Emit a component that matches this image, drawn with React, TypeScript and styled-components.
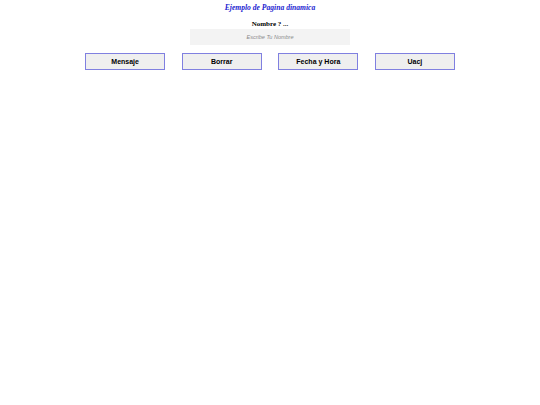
import React, { useState } from 'react'
import styled, { createGlobalStyle } from 'styled-components'

const GlobalStyle = createGlobalStyle`
  html, body {
    margin: 0;
    padding: 0;
    background: #ffffff;
  }
`

const Page = styled.div`
  display: flex;
  flex-direction: column;
  align-items: center;
  padding-top: 3px;
`

const Title = styled.h1`
  margin: 0;
  font-family: 'Liberation Serif', 'Times New Roman', serif;
  font-style: italic;
  font-weight: bold;
  font-size: 7.6px;
  line-height: 9px;
  color: #1c1cd0;
`

const Label = styled.div`
  margin-top: 8px;
  font-family: 'Liberation Serif', 'Times New Roman', serif;
  font-weight: bold;
  font-size: 7px;
  line-height: 8px;
  color: #000;
`

const NameInput = styled.input`
  box-sizing: border-box;
  margin-top: 1px;
  width: 160px;
  height: 16px;
  border: none;
  outline: none;
  background: #f3f3f3;
  text-align: center;
  font-family: 'Liberation Sans', Arial, sans-serif;
  font-size: 5.5px;
  color: #333;

  &::placeholder {
    color: #8a8a8a;
    font-style: italic;
  }
`

const ButtonRow = styled.div`
  display: flex;
  justify-content: center;
  gap: 16.6px;
  margin-top: 8px;
`

const ActionButton = styled.button`
  box-sizing: border-box;
  width: 80px;
  height: 17px;
  padding: 0;
  border: 1px solid #8080e0;
  background: #efefef;
  font-family: 'Liberation Sans', Arial, sans-serif;
  font-weight: bold;
  font-size: 7px;
  color: #000;
  cursor: pointer;
`

const Output = styled.div`
  margin-top: 6px;
  font-family: 'Liberation Sans', Arial, sans-serif;
  font-size: 7px;
`

export default function App() {
  const [name, setName] = useState('')
  const [message, setMessage] = useState('')

  return (
    <>
      <GlobalStyle />
      <Page>
        <Title>Ejemplo de Pagina dinamica</Title>
        <Label>Nombre ? ...</Label>
        <NameInput
          placeholder="Escribe Tu Nombre"
          value={name}
          onChange={e => setName(e.target.value)}
        />
        <ButtonRow>
          <ActionButton onClick={() => setMessage(name ? `Hola ${name}` : 'Hola')}>Mensaje</ActionButton>
          <ActionButton
            onClick={() => {
              setName('')
              setMessage('')
            }}
          >
            Borrar
          </ActionButton>
          <ActionButton onClick={() => setMessage(new Date().toLocaleString())}>Fecha y Hora</ActionButton>
          <ActionButton onClick={() => setMessage('Universidad Autónoma de Ciudad Juárez')}>Uacj</ActionButton>
        </ButtonRow>
        {message && <Output>{message}</Output>}
      </Page>
    </>
  )
}
